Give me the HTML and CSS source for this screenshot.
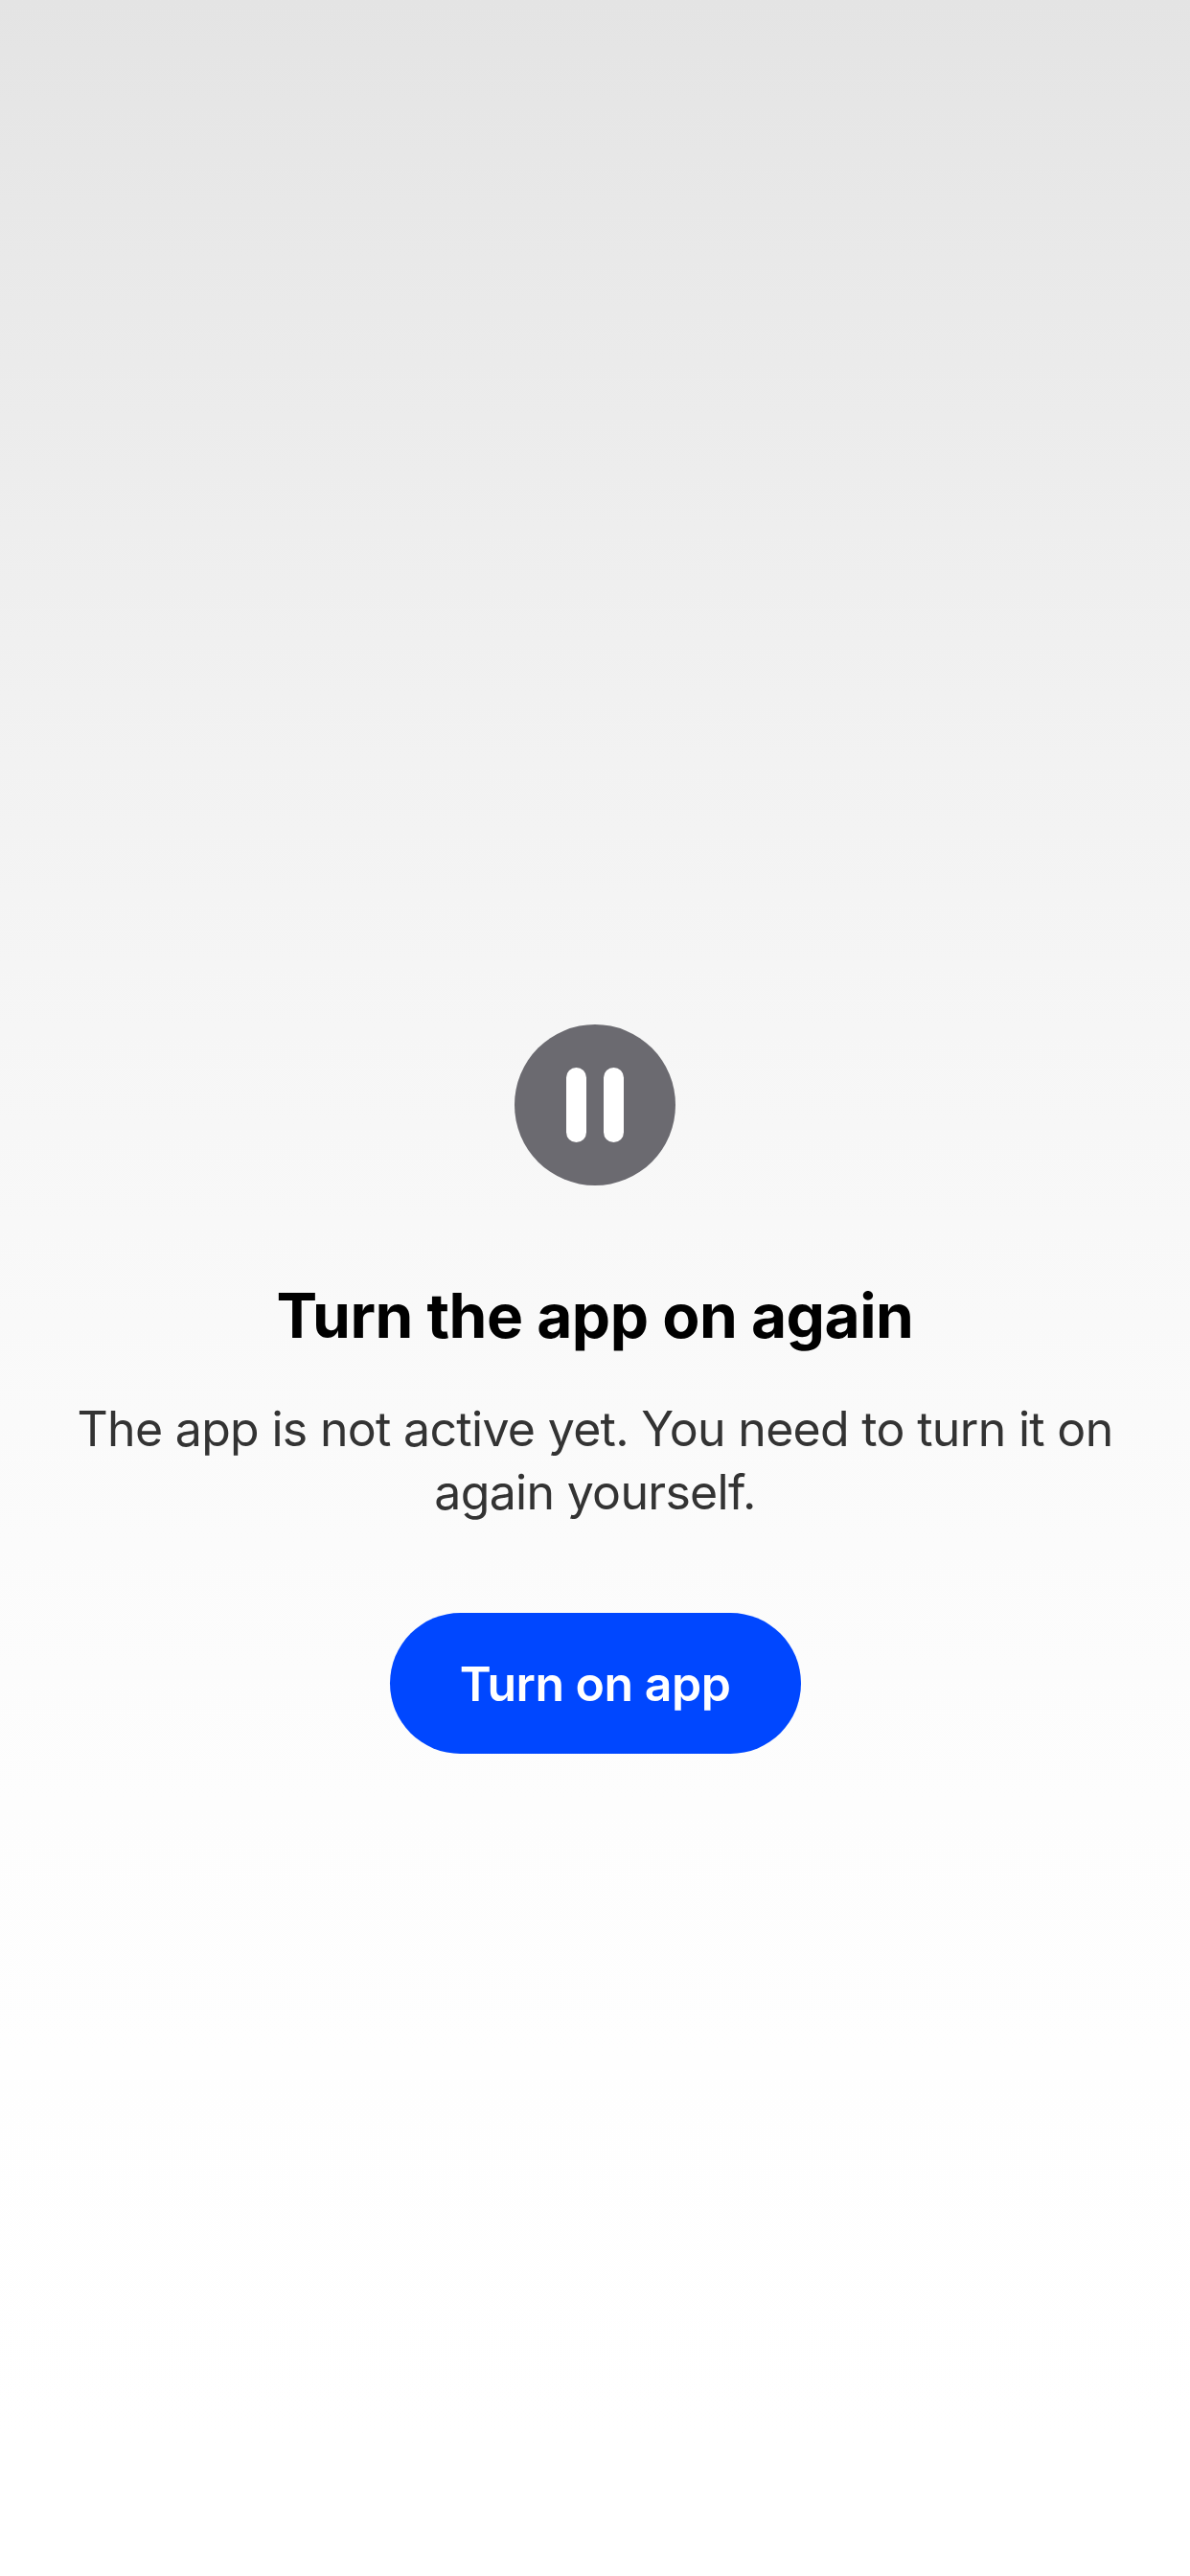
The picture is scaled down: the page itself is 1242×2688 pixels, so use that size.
FILE: index.html
```html
<!DOCTYPE html>
<html lang="en">
<head>
<meta charset="utf-8">
<title>Turn the app on again</title>
<link rel="stylesheet" href="styles.css">
</head>
<body>
<main class="screen">
  <svg class="pause-icon" viewBox="0 0 168 168" aria-hidden="true">
    <circle cx="84" cy="84" r="84" fill="#6b6a70"/>
    <rect x="54" y="45" width="21" height="78" rx="10.5" fill="#fff"/>
    <rect x="93" y="45" width="21" height="78" rx="10.5" fill="#fff"/>
  </svg>
  <h1 class="title">Turn the app on again</h1>
  <p class="message">The app is not active yet. You need to turn it on again yourself.</p>
  <button class="primary-button" type="button">Turn on app</button>
</main>
</body>
</html>
```

FILE: styles.css
```css
* { box-sizing: border-box; }

body {
  margin: 0;
  font-family: Inter, "Liberation Sans", sans-serif;
}

.screen {
  display: flex;
  flex-direction: column;
  align-items: center;
  height: 2688px;
  padding: 1069px 60px 0;
  text-align: center;
  background: linear-gradient(#e4e4e4 0%, #ebebeb 14%, #f1f1f1 27%, #f6f6f6 40%, #fafafa 55%, #fdfdfd 70%, #fefefe 80%, #fff 95%);
}

.pause-icon {
  display: block;
  width: 168px;
  height: 168px;
}

.title {
  margin: 96px 0 0;
  font-size: 64px;
  font-weight: 700;
  line-height: 80px;
  letter-spacing: -0.5px;
  white-space: nowrap;
  color: #000;
}

.message {
  margin: 45px 0 0;
  font-size: 50px;
  font-weight: 400;
  line-height: 66px;
  letter-spacing: -0.69px;
  color: #333;
}

.primary-button {
  width: 429px;
  height: 147px;
  margin-top: 93px;
  padding: 0;
  border: 0;
  border-radius: 74px;
  background: #0047ff;
  color: #fff;
  font-family: inherit;
  font-size: 50px;
  font-weight: 600;
  line-height: 60px;
  letter-spacing: -0.5px;
}
```
